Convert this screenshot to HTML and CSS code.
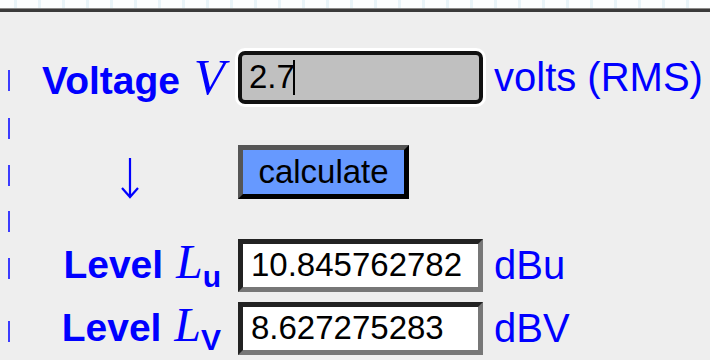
FILE: index.html
```html
<!DOCTYPE html>
<html lang="en">
<head>
    <meta charset="UTF-8">
    <title>Voltage to level</title>
    <link rel="stylesheet" href="styles.css">
</head>
<body>
    <div class="ruler"></div>
    <div class="calc">
        <div class="row row-in">
            <span class="mark"></span>
            <label class="label" for="volts">Voltage <i class="sym">V</i></label>
            <input type="text" id="volts" class="field field-in" value="2.7"/>
            <span class="unit">volts (RMS)</span>
        </div>
        <div class="row row-gap"><span class="mark"></span></div>
        <div class="row row-btn">
            <span class="mark"></span>
            <span class="label arrow">
                <svg width="20" height="42" viewBox="0 0 20 42">
                    <path d="M10 1V40M2 31L10 40L18 31" fill="none" stroke="#0000ff" stroke-width="2.2"/>
                </svg>
            </span>
            <button class="go">calculate</button>
        </div>
        <div class="row row-gap"><span class="mark"></span></div>
        <div class="row row-out">
            <span class="mark"></span>
            <label class="label" for="dbu">Level <i class="sym">L</i><sub>u</sub></label>
            <input type="text" id="dbu" class="field field-out" value="10.845762782" readonly/>
            <span class="unit">dBu</span>
        </div>
        <div class="row row-out row-last">
            <span class="mark"></span>
            <label class="label" for="dbv">Level <i class="sym">L</i><sub>V</sub></label>
            <input type="text" id="dbv" class="field field-out" value="8.627275283" readonly/>
            <span class="unit">dBV</span>
        </div>
    </div>
    <script>
        const volts = document.getElementById('volts');
        document.querySelector('.go').onclick = function(){
            const v = parseFloat(volts.value);
            if(!(v > 0)) return;
            document.getElementById('dbu').value = (20*Math.log10(v/0.7745966692)).toFixed(9);
            document.getElementById('dbv').value = (20*Math.log10(v)).toFixed(9);
        };
    </script>
</body>
</html>
```

FILE: styles.css
```css
*{
    padding:0;
    margin:0;
    box-sizing:border-box;
}
body{
    background:#eeeeee;
    font-family:"Liberation Sans", Arial, sans-serif;
}
.ruler{
    height:12px;
    background:
        repeating-linear-gradient(90deg, transparent 0, transparent 14px, #e8f3f8 14px, #e8f3f8 17px, transparent 17px, transparent 24px),
        #fbfdfe;
    border-bottom:3px solid #3a3a3a;
    box-shadow:inset 0 -1px 0 #8a8a8a;
}
.calc{
    padding-top:36px;
}
.row{
    display:flex;
    align-items:center;
}
.row-in{
    height:58px;
}
.row-gap{
    height:39px;
}
.row-btn{
    height:54px;
}
.row-out{
    height:54px;
}
.row-last{
    margin-top:9px;
}
.mark{
    width:2px;
    height:21px;
    margin-left:8px;
    background:#3b3bff;
    align-self:center;
    position:relative;
    top:3px;
}
.label{
    width:228px;
    padding-right:10px;
    text-align:right;
    color:#0000ff;
    font-weight:bold;
    font-size:39px;
    line-height:1;
    white-space:nowrap;
}
.row-in .label{
    padding-top:6px;
    padding-right:13px;
}
.sym{
    font-family:"Liberation Serif", "Times New Roman", serif;
    font-weight:normal;
    font-size:48px;
    line-height:0;
    margin-left:2px;
}
.row-in .sym{
    font-size:51px;
    margin-left:3px;
}
.label sub{
    font-size:30px;
    vertical-align:-9px;
    line-height:0;
}
.row-out .label{
    padding-right:17px;
    padding-bottom:1px;
}
.arrow{
    display:flex;
    justify-content:center;
    padding-right:0;
    padding-left:12px;
    padding-top:12px;
}
.field{
    width:245px;
    height:53px;
    padding:0 8px;
    font-family:"Liberation Sans", Arial, sans-serif;
    font-size:33px;
    color:#000;
    outline:none;
}
.field-in{
    background:linear-gradient(#000, #000) no-repeat 51px 5px / 2px 35px, #c0c0c0;
    border:4px solid #111;
    border-radius:7px;
    box-shadow:0 0 0 3px #fff;
    padding-left:7px;
}
.field-out{
    background:#fff;
    border:5px solid;
    border-color:#222 #777 #777 #222;
    padding-left:8px;
}
.unit{
    margin-left:11px;
    color:#0000ff;
    font-size:40px;
    white-space:nowrap;
}
.go{
    width:171px;
    height:54px;
    background:#6699ff;
    border:5px solid;
    border-color:#555 #000 #000 #555;
    font-family:"Liberation Sans", Arial, sans-serif;
    font-size:33px;
    color:#000;
    outline:none;
}
```
